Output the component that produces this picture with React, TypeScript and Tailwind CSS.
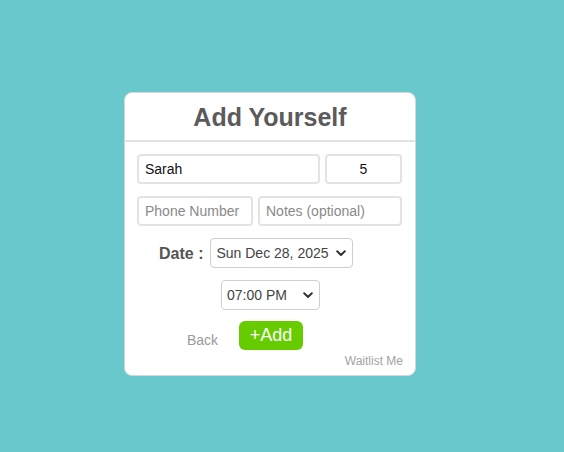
import React from "react";

const Chevron = () => (
  <svg width="10" height="7" viewBox="0 0 10 7" className="shrink-0">
    <path d="M1.2 1.3 L5 5 L8.8 1.3" fill="none" stroke="#333" strokeWidth="2" strokeLinecap="round" strokeLinejoin="round" />
  </svg>
);

export default function App() {
  return (
    <div className="min-h-[452px] w-full bg-[#69c8cc] pl-[124px] pt-[92px] font-['Liberation_Sans',Arial,sans-serif]">
      <div className="flex w-[292px] h-[284px] flex-col rounded-[8px] border border-[#d6d6d6] bg-white">
        <div className="flex h-[49px] items-center justify-center border-b-2 border-[#e3e3e3]">
          <h1 className="text-[25px] font-bold leading-none text-[#5b5b5b] mt-[2px]">Add Yourself</h1>
        </div>
        <div className="flex flex-col px-[12px] pt-[12px]">
          <div className="flex gap-[5px]">
            <input
              className="h-[30px] w-[183px] rounded-[4px] border-2 border-[#e3e3e3] px-[6px] text-[14px] text-[#111] outline-none"
              defaultValue="Sarah"
            />
            <input
              className="h-[30px] w-[77px] rounded-[4px] border-2 border-[#e3e3e3] px-[6px] text-center text-[14px] text-[#111] outline-none"
              defaultValue="5"
            />
          </div>
          <div className="mt-[12px] flex gap-[5px]">
            <input
              className="h-[30px] w-[116px] rounded-[4px] border-2 border-[#e3e3e3] px-[6px] text-[14px] text-[#111] outline-none placeholder:text-[#8a8a8a]"
              placeholder="Phone Number"
            />
            <input
              className="h-[30px] w-[144px] rounded-[4px] border-2 border-[#e3e3e3] px-[6px] text-[14px] text-[#111] outline-none placeholder:text-[#8a8a8a]"
              placeholder="Notes (optional)"
            />
          </div>
          <div className="mt-[12px] flex items-center pl-[22px]">
            <span className="mt-[2px] text-[16px] font-bold text-[#555]">Date :</span>
            <div className="ml-[7px] flex h-[30px] w-[143px] items-center justify-between rounded-[4px] border border-[#cfcfcf] pl-[5px] pr-[6px] text-[14px] text-[#444]">
              <span>Sun Dec 28, 2025</span>
              <Chevron />
            </div>
          </div>
          <div className="mt-[12px] flex justify-center pl-[1px]">
            <div className="flex h-[30px] w-[99px] items-center justify-between rounded-[4px] border border-[#cfcfcf] pl-[5px] pr-[6px] text-[14px] text-[#444]">
              <span>07:00 PM</span>
              <Chevron />
            </div>
          </div>
          <div className="mt-[11px] flex items-end pl-[50px]">
            <span className="text-[14px] leading-[20px] text-[#9a9a9a]">Back</span>
            <button className="ml-[21px] flex h-[29px] w-[64px] items-center justify-center rounded-[6px] bg-[#66cc00] text-[18px] text-white">
              +Add
            </button>
          </div>
          <div className="mt-[2px] flex justify-end">
            <span className="text-[12px] text-[#a3a3a3]">Waitlist Me</span>
          </div>
        </div>
      </div>
    </div>
  );
}
